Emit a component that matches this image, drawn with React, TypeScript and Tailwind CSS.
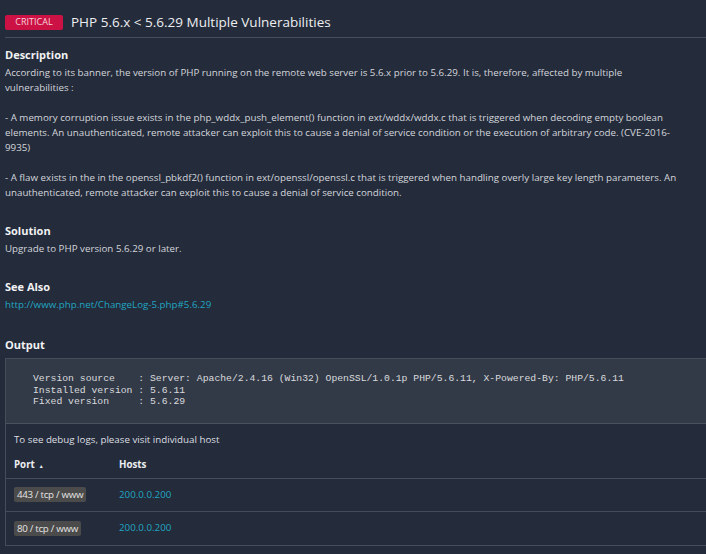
import React from 'react';

type PortRow = {
  port: string;
  host: string;
};

const rows: PortRow[] = [
  { port: '443 / tcp / www', host: '200.0.0.200' },
  { port: '80 / tcp / www', host: '200.0.0.200' },
];

const description = `According to its banner, the version of PHP running on the remote web server is 5.6.x prior to 5.6.29. It is, therefore, affected by multiple vulnerabilities :

- A memory corruption issue exists in the php_wddx_push_element() function in ext/wddx/wddx.c that is triggered when decoding empty boolean elements. An unauthenticated, remote attacker can exploit this to cause a denial of service condition or the execution of arbitrary code. (CVE-2016-9935)

- A flaw exists in the in the openssl_pbkdf2() function in ext/openssl/openssl.c that is triggered when handling overly large key length parameters. An unauthenticated, remote attacker can exploit this to cause a denial of service condition.`;

const output = `Version source    : Server: Apache/2.4.16 (Win32) OpenSSL/1.0.1p PHP/5.6.11, X-Powered-By: PHP/5.6.11
Installed version : 5.6.11
Fixed version     : 5.6.29`;

const Section = ({ title, first, children }: { title: string; first?: boolean; children: React.ReactNode }) => (
  <div className={first ? 'mt-[9px]' : 'mt-[23px]'}>
    <h3 className="text-[11px] leading-[16px] font-bold text-[#f1f2f4] mb-[2px]">{title}</h3>
    {children}
  </div>
);

export default function App() {
  return (
    <div
      className="w-[706px] h-[554px] overflow-hidden bg-[#242b3a] text-[#d3d6dc]"
      style={{ fontFamily: '"Open Sans", "Noto Sans", sans-serif' }}
    >
      <div className="w-[730px] pl-[5px]">
        <div className="flex items-center gap-[8px] pt-[12px] pb-[5px] border-b border-[#474e5b]">
          <span className="w-[58px] h-[15px] rounded-[2px] bg-[#cc1245] text-[#f6d2dc] text-[9px] flex items-center justify-center">
            CRITICAL
          </span>
          <h1 className="text-[13.5px] leading-[20px] text-[#eceef1]">PHP 5.6.x &lt; 5.6.29 Multiple Vulnerabilities</h1>
        </div>

        <div className="max-w-[676px]">
          <Section title="Description" first>
            <p className="text-[9.75px] leading-[15px] whitespace-pre-line">{description}</p>
          </Section>

          <Section title="Solution">
            <p className="text-[9.75px] leading-[15px]">Upgrade to PHP version 5.6.29 or later.</p>
          </Section>

          <Section title="See Also">
            <a className="block text-[9.75px] leading-[15px] text-[#21a6c2]" href="#">
              http://www.php.net/ChangeLog-5.php#5.6.29
            </a>
          </Section>
        </div>

        <div className="mt-[25px]">
          <h3 className="text-[11px] leading-[16px] font-bold text-[#f1f2f4] mb-[5px]">Output</h3>
          <div className="border border-[#464d5a]">
            <pre
              className="bg-[#333a47] pl-[27px] pt-[14px] pb-[15px] text-[9.75px] leading-[11.7px] text-[#d9dbdf] border-b border-[#4a5160]"
              style={{ fontFamily: '"Liberation Mono", "DejaVu Sans Mono", monospace' }}
            >
              {output}
            </pre>
            <p className="text-[9.75px] leading-[15px] px-[8px] pt-[8px] text-[#dcdfe3]">To see debug logs, please visit individual host</p>
            <div className="flex items-center h-[26px] mt-[6px] px-[8px] text-[9.75px] font-bold text-[#eceef1] border-b border-[#464d5a]">
              <div className="w-[105px] flex items-center gap-[4px]">
                Port <span className="text-[5px] leading-none mt-[2px]">▲</span>
              </div>
              <div>Hosts</div>
            </div>
            {rows.map((row, i) => (
              <div
                key={row.port}
                className={`flex items-center h-[33px] px-[8px] text-[9.75px] ${i < rows.length - 1 ? 'border-b border-[#464d5a]' : ''}`}
              >
                <div className="w-[105px]">
                  <span className="inline-block bg-[#4b4b4b] text-[#e4e4e4] rounded-[2px] px-[3px] leading-[15px] tracking-[-0.3px]">
                    {row.port}
                  </span>
                </div>
                <a className="text-[#21a6c2]" href="#">
                  {row.host}
                </a>
              </div>
            ))}
          </div>
        </div>
      </div>
    </div>
  );
}
